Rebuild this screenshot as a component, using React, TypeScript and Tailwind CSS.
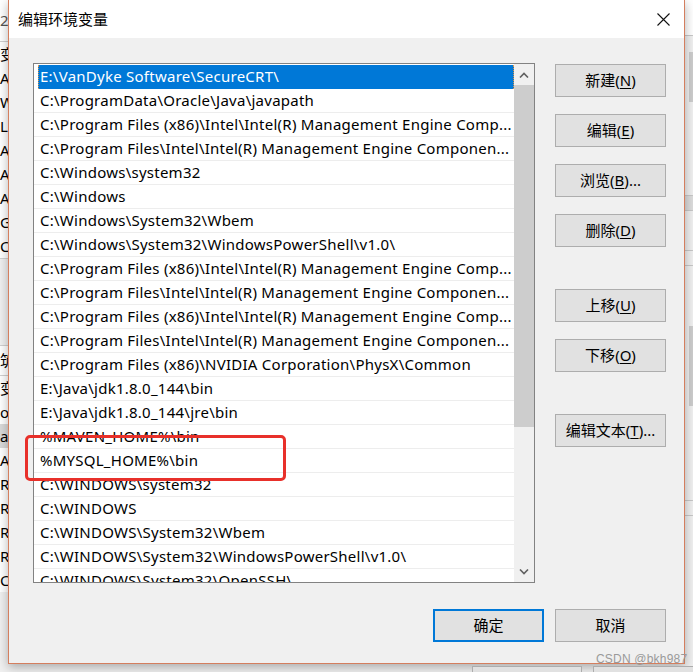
import React from "react";

const rows = [
  "E:\\VanDyke Software\\SecureCRT\\",
  "C:\\ProgramData\\Oracle\\Java\\javapath",
  "C:\\Program Files (x86)\\Intel\\Intel(R) Management Engine Comp...",
  "C:\\Program Files\\Intel\\Intel(R) Management Engine Componen...",
  "C:\\Windows\\system32",
  "C:\\Windows",
  "C:\\Windows\\System32\\Wbem",
  "C:\\Windows\\System32\\WindowsPowerShell\\v1.0\\",
  "C:\\Program Files (x86)\\Intel\\Intel(R) Management Engine Comp...",
  "C:\\Program Files\\Intel\\Intel(R) Management Engine Componen...",
  "C:\\Program Files (x86)\\Intel\\Intel(R) Management Engine Comp...",
  "C:\\Program Files\\Intel\\Intel(R) Management Engine Componen...",
  "C:\\Program Files (x86)\\NVIDIA Corporation\\PhysX\\Common",
  "E:\\Java\\jdk1.8.0_144\\bin",
  "E:\\Java\\jdk1.8.0_144\\jre\\bin",
  "%MAVEN_HOME%\\bin",
  "%MYSQL_HOME%\\bin",
  "C:\\WINDOWS\\system32",
  "C:\\WINDOWS",
  "C:\\WINDOWS\\System32\\Wbem",
  "C:\\WINDOWS\\System32\\WindowsPowerShell\\v1.0\\",
  "C:\\WINDOWS\\System32\\OpenSSH\\",
];

// fragments of the window behind the dialog (only the first letters show)
const behindTop = ["变", "AF", "W", "L", "A", "A", "A", "G", "C"];
const behindBottom = ["变", "os", "a", "A", "R", "R", "R", "R", "C"];

const font = { fontFamily: '"Noto Sans", "Noto Sans CJK SC", sans-serif' };

function Btn({ label, mn, tail = "", primary = false, w = "w-[111px]" }: { label: string; mn?: string; tail?: string; primary?: boolean; w?: string }) {
  return (
    <button
      className={
        w +
        " h-[33px] bg-[#e1e1e1] text-[15px] text-black flex items-center justify-center " +
        (primary ? "border-2 border-[#0078d7]" : "border border-[#adadad]")
      }
    >
      {label}
      {mn && (
        <>
          (<span className="underline underline-offset-2">{mn}</span>){tail}
        </>
      )}
    </button>
  );
}

function Chevron({ up }: { up?: boolean }) {
  return (
    <svg width="10" height="6" viewBox="0 0 10 6">
      <polyline
        points={up ? "1,5.5 5,1.5 9,5.5" : "1,0.5 5,4.5 9,0.5"}
        fill="none"
        stroke="#606060"
        strokeWidth="1.6"
      />
    </svg>
  );
}

export default function App() {
  return (
    <div className="relative w-[693px] h-[672px] overflow-hidden bg-[#f0f0f0] text-black" style={font}>
      {/* window behind, left edge */}
      <div className="absolute left-0 top-0 w-[8px] h-[672px] overflow-hidden bg-white flex flex-col text-[15px] leading-[24px]">
        <div className="h-[42px] pt-[8px] text-[#555] border-b border-[#d0d0d0]">24</div>
        {behindTop.map((t, i) => (
          <div key={i} className="h-[24px] whitespace-nowrap">{t}</div>
        ))}
        <div className="h-[88px] bg-[#f0f0f0] border-y border-[#d0d0d0]" />
        <div className="h-[30px] pt-[2px] border-b border-[#d0d0d0]">筑</div>
        {behindBottom.map((t, i) => (
          <div key={i} className={"h-[24px] whitespace-nowrap " + (i === 2 ? "bg-[#d9d9d9]" : "")}>{t}</div>
        ))}
        <div className="flex-1 bg-[#f0f0f0]" />
      </div>

      {/* window behind, right edge */}
      <div className="absolute right-0 top-0 w-[8px] h-[672px] flex flex-col bg-[#f0f0f0]">
        <div className="h-[35px] bg-white" />
        <div className="h-[160px] border-t border-[#c8c8c8] pl-[4px] pt-[16px]">
          <div className="w-[4px] h-[50px] bg-[#cdcdcd]" />
        </div>
        <div className="h-[15px] border-t border-[#c8c8c8] bg-[#dcdcdc]" />
        <div className="h-[40px] border-t border-[#c8c8c8]" />
        <div className="h-[15px] border-t border-[#c8c8c8]" />
        <div className="h-[235px] border-t border-[#c8c8c8] pl-[4px] pt-[60px]">
          <div className="w-[4px] h-[80px] bg-[#cdcdcd]" />
        </div>
        <div className="h-[15px] border-t border-[#c8c8c8]" />
        <div className="flex-1 border-t border-[#c8c8c8]" />
      </div>

      {/* dialog */}
      <div className="absolute left-[8px] top-0 w-[677px] h-[664px] flex flex-col border-x border-b border-[#d47e5e] shadow-[0_3px_10px_rgba(0,0,0,0.3)]">
        <div className="h-[38px] bg-white flex items-center justify-between pl-[9px] pr-[14px]">
          <span className="text-[15px]">编辑环境变量</span>
          <svg width="13" height="13" viewBox="0 0 13 13">
            <path d="M0.5 0.5 L12.5 12.5 M12.5 0.5 L0.5 12.5" stroke="#111" strokeWidth="1.1" />
          </svg>
        </div>

        <div className="flex-1 bg-[#f0f0f0] flex flex-col pl-[24px] pr-[18px]">
          <div className="flex gap-[20px] pt-[25px]">
            {/* list */}
            <div className="w-[502px] h-[520px] border border-[#828282] bg-white flex">
              <div className="flex-1 pt-[1px] overflow-hidden tracking-[0.25px]">
                {rows.map((r, i) =>
                  i === 0 ? (
                    <div
                      key={i}
                      className="ml-[4px] h-[24px] bg-[#0078d7] text-white text-[15px] leading-[23px] pl-[1px] whitespace-nowrap overflow-hidden border-x border-dotted border-[#d8944c]"
                    >
                      {r}
                    </div>
                  ) : (
                    <div
                      key={i}
                      className="h-[24px] border-b border-[#ededed] text-[15px] leading-[23px] pl-[6px] whitespace-nowrap overflow-hidden"
                    >
                      {r}
                    </div>
                  )
                )}
              </div>
              <div className="w-[20px] bg-[#f0f0f0] flex flex-col">
                <div className="h-[21px] flex items-center justify-center">
                  <Chevron up />
                </div>
                <div className="h-[342px] bg-[#cdcdcd]" />
                <div className="flex-1" />
                <div className="h-[21px] flex items-center justify-center">
                  <Chevron />
                </div>
              </div>
            </div>

            {/* side buttons */}
            <div className="flex flex-col pt-[1px]">
              <div className="flex flex-col gap-[17px]">
                <Btn label="新建" mn="N" />
                <Btn label="编辑" mn="E" />
                <Btn label="浏览" mn="B" tail="..." />
                <Btn label="删除" mn="D" />
              </div>
              <div className="flex flex-col gap-[17px] mt-[42px]">
                <Btn label="上移" mn="U" />
                <Btn label="下移" mn="O" />
              </div>
              <div className="mt-[42px]">
                <Btn label="编辑文本" mn="T" tail="..." />
              </div>
            </div>
          </div>

          <div className="flex justify-end gap-[11px] pt-[26px]">
            <Btn label="确定" primary />
            <Btn label="取消" />
          </div>
        </div>
      </div>

      {/* window behind, bottom edge */}
      <div className="absolute left-[472px] top-[666px] w-[110px] h-[10px] border border-[#adadad] bg-[#e1e1e1]" />
      <div className="absolute left-[593px] top-[666px] w-[110px] h-[10px] border border-[#adadad] bg-[#e1e1e1]" />

      {/* annotation */}
      <div className="absolute left-[25px] top-[435px] w-[261px] h-[46px] border-[3px] border-[#e8302a] rounded-[5px]" />

      {/* watermark */}
      <div
        className="absolute left-[596px] top-[650px] text-[12px] text-[#9a9a9a] tracking-[0.2px]"
        style={{ fontFamily: '"Liberation Sans", sans-serif' }}
      >
        CSDN @bkh987
      </div>
    </div>
  );
}
